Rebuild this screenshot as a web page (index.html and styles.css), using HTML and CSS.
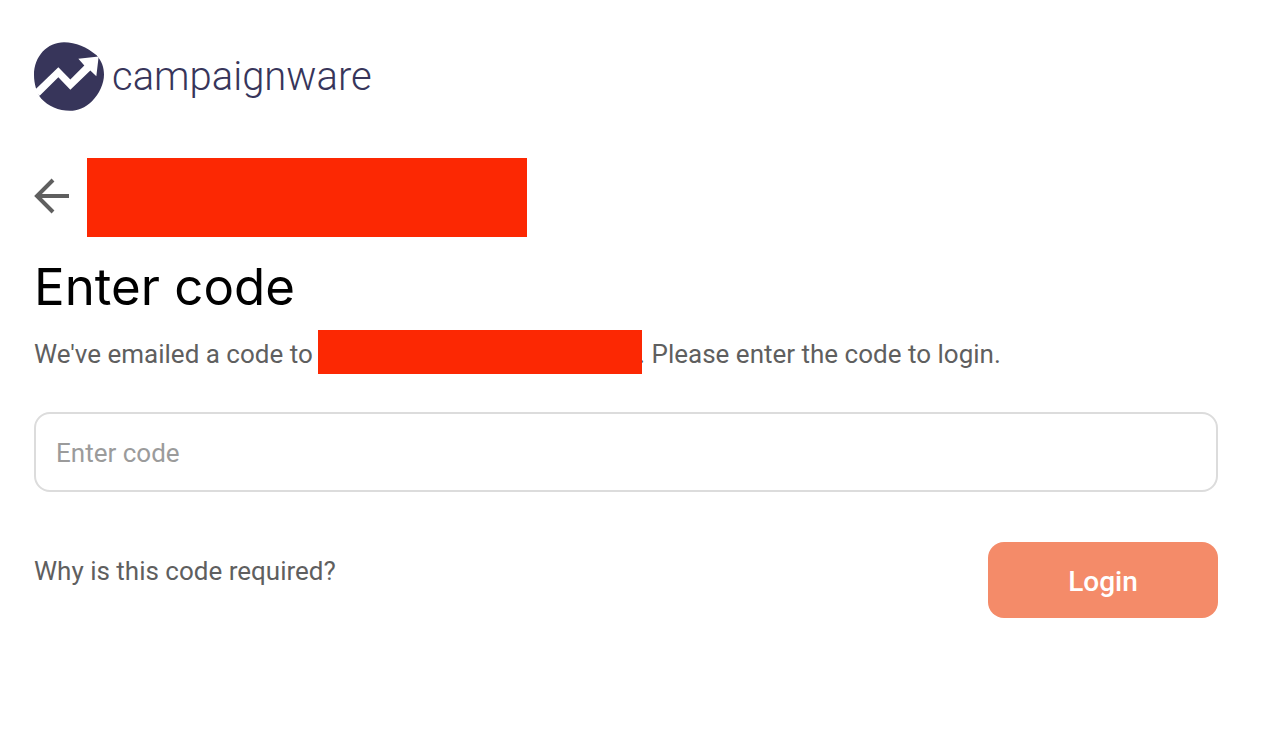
FILE: index.html
```
<!DOCTYPE html>
<html lang="en">
<head>
  <meta charset="UTF-8">
  <meta name="viewport" content="width=device-width, initial-scale=1.0">
  <title>Campaignware - Enter code</title>
  <link rel="stylesheet" href="styles.css">
</head>
<body>
  <main class="login">
    <div class="brand">
      <svg class="brand-mark" viewBox="0 0 210 206" aria-hidden="true">
        <path fill="#37355a" d="M0 98C0 42 40 0 90 0c36 0 68 15 98 39 15 17 22 36 22 58 0 28-14 58-36 80-20 20-44 29-66 29-34 0-66-14-86-36C8 152 0 126 0 98z"/>
        <path fill="#fff" d="M0 146L73 75l36 37 42-42-18-20 61-7-7 59-18-17-60 58-36-38-56 56z"/>
      </svg>
      <span class="brand-name">campaignware</span>
    </div>

    <div class="account">
      <button type="button" class="back-btn" aria-label="Back">
        <svg viewBox="0 0 36 36" aria-hidden="true">
          <path d="M19 2L3 18l16 16M3 18h32" fill="none" stroke="#5f5f5f" stroke-width="4"/>
        </svg>
      </button>
      <span class="redacted account-name"></span>
    </div>

    <h1>Enter code</h1>
    <p class="message">We've emailed a code to <span class="redacted email"></span>. Please enter the code to login.</p>

    <form id="code-form">
      <input type="text" id="code" class="code-input" placeholder="Enter code" aria-label="Enter code">
      <div class="form-footer">
        <a href="#" class="help-link">Why is this code required?</a>
        <button type="submit" class="login-btn">Login</button>
      </div>
    </form>
  </main>
</body>
</html>
```
FILE: styles.css
```
body {
  font-family: Roboto, "Liberation Sans", sans-serif;
  font-size: 26px;
  line-height: 32px;
  margin: 0;
  color: #5f5f5f;
  background-color: #fff;
}

.login {
  padding: 42px 50px 42px 34px;
}

.brand {
  display: flex;
  align-items: center;
  gap: 8px;
}

.brand-mark {
  width: 70px;
  height: 69px;
}

.brand-name {
  font-size: 40px;
  font-weight: 300;
  line-height: 64px;
  color: #37355a;
}

.account {
  display: flex;
  align-items: flex-start;
  gap: 17px;
  margin-top: 47px;
}

.back-btn {
  width: 36px;
  height: 36px;
  margin-top: 20px;
  padding: 0;
  border: none;
  background: none;
  cursor: pointer;
}

.back-btn svg {
  display: block;
}

.redacted {
  background-color: #fc2803;
}

.account-name {
  width: 440px;
  height: 79px;
}

h1 {
  margin: 20px 0 13px;
  font-family: Inter, Roboto, sans-serif;
  font-size: 51px;
  font-weight: 400;
  line-height: 60px;
  color: #000;
}

.message {
  margin: 0;
  line-height: 48px;
}

/* sits over the edge of the full stop after it */
.email {
  display: inline-block;
  position: relative;
  width: 324px;
  height: 44px;
  margin: 0 -4px 0 -1px;
  vertical-align: top;
}

.code-input {
  display: block;
  width: 100%;
  height: 80px;
  margin-top: 34px;
  padding: 2px 20px 0;
  box-sizing: border-box;
  border: 2px solid #dcdcdc;
  border-radius: 16px;
  font: inherit;
  color: #5f5f5f;
}

.code-input::placeholder {
  color: #9b9b9b;
}

.form-footer {
  display: flex;
  justify-content: space-between;
  align-items: flex-start;
  margin-top: 50px;
}

.help-link {
  margin-top: 13px;
  color: #5f5f5f;
  text-decoration: none;
}

.login-btn {
  width: 230px;
  height: 76px;
  padding: 3px 0 0;
  border: none;
  border-radius: 16px;
  background-color: #f48b69;
  color: #fff;
  font: inherit;
  font-size: 28px;
  font-weight: 500;
  cursor: pointer;
}
```
